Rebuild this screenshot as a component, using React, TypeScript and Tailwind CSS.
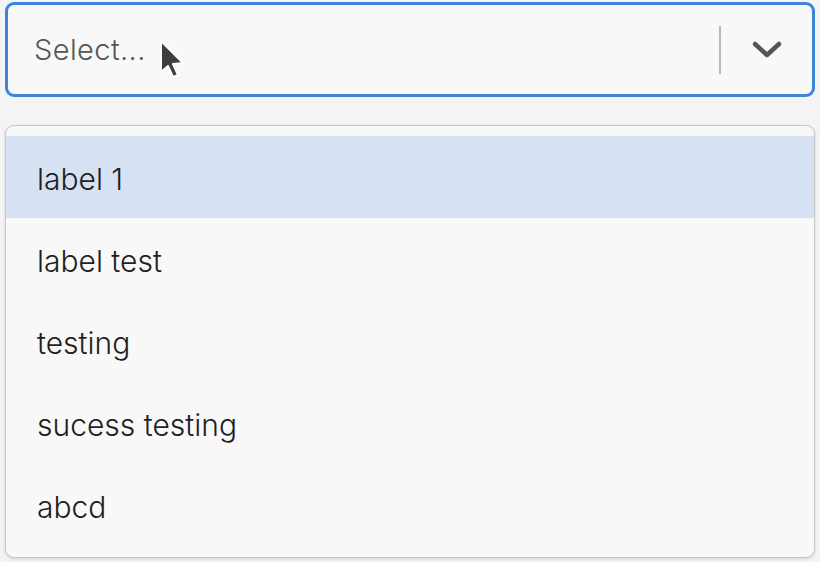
import React from "react";

const options = ["label 1", "label test", "testing", "sucess testing", "abcd"];

export default function App() {
  return (
    <div
      className="w-[820px] h-[562px] overflow-hidden bg-[#f4f4f4] relative pt-[2px] px-[5px]"
      style={{ fontFamily: "Inter, Roboto, 'Liberation Sans', sans-serif" }}
    >
      <div className="h-[95px] rounded-[9px] border-[3px] border-[#3d85d8] bg-[#f8f8f8] flex items-center">
        <div className="flex-1 pl-[26px] text-[29px] font-light text-[#555] tracking-[0.4px]">Select...</div>
        <div className="w-[2px] h-[48px] bg-[#b8b8b8]" />
        <div className="w-[91px] flex items-center justify-center">
          <svg width="30" height="18" viewBox="0 0 30 18">
            <path d="M3 3 L15 14 L27 3" fill="none" stroke="#555" strokeWidth="4.5" strokeLinecap="round" strokeLinejoin="round" />
          </svg>
        </div>
      </div>
      <div className="mt-[28px] h-[433px] rounded-[9px] border border-[#c8c8c8] bg-[#f8f8f8] shadow-[0_1px_3px_rgba(0,0,0,0.15)] pt-[10px] overflow-hidden">
        {options.map((o, i) => (
          <div
            key={o}
            className={`h-[82px] flex items-center pl-[31px] pt-[4px] text-[30px] font-light text-[#1f1f1f] ${i === 0 ? "bg-[#d6e2f3]" : ""}`}
          >
            {o}
          </div>
        ))}
      </div>
      <svg className="absolute left-[157px] top-[38px]" width="30" height="44" viewBox="0 0 30 44">
        <path d="M4 3 L4 34 L11 28 L16 39 L21 37 L16 26 L26 25 Z" fill="#3e3e3e" stroke="#fff" strokeWidth="2" strokeLinejoin="round" />
      </svg>
    </div>
  );
}
